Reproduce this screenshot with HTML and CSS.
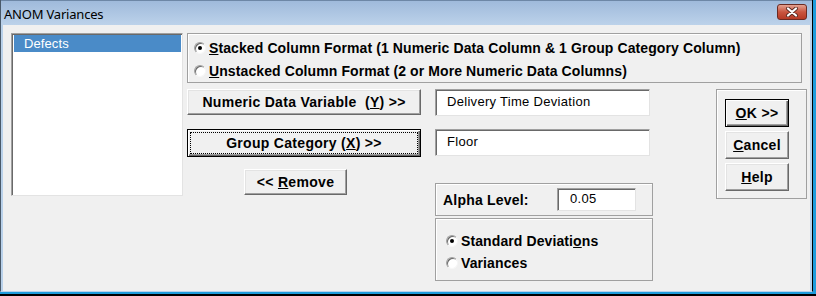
FILE: index.html
```html
<!DOCTYPE html>
<html lang="en">

<head>
    <meta charset="UTF-8">
    <meta name="viewport" content="width=device-width, initial-scale=1.0">
    <title>ANOM Variances</title>
    <link rel="stylesheet" href="styles.css">
</head>

<body>
    <div class="screen">
        <div class="window">
            <div class="titlebar">
                <span class="title">ANOM Variances</span>
                <span class="close-btn">
                    <svg width="14" height="10" viewBox="0 0 14 10">
                        <path d="M3 1.5 L11 8.5 M11 1.5 L3 8.5" stroke="#5a2a22" stroke-width="4" stroke-linecap="round" />
                        <path d="M3 1.5 L11 8.5 M11 1.5 L3 8.5" stroke="#ffffff" stroke-width="2.2" stroke-linecap="round" />
                    </svg>
                </span>
            </div>

            <div class="client">
                <div class="listbox">
                    <div class="list-item selected">Defects</div>
                </div>

                <div class="main">
                    <div class="frame format-frame">
                        <label class="radio-row">
                            <span class="radio checked"></span>
                            <span><u>S</u>tacked Column Format (1 Numeric Data Column &amp; 1 Group Category Column)</span>
                        </label>
                        <label class="radio-row">
                            <span class="radio"></span>
                            <span><u>U</u>nstacked Column Format (2 or More Numeric Data Columns)</span>
                        </label>
                    </div>

                    <div class="work-row">
                        <div class="col-vars">
                            <button class="btn var-btn">Numeric Data Variable&nbsp; (<u>Y</u>) &gt;&gt;</button>
                            <button class="btn var-btn default focused">Group Category (<u>X</u>) &gt;&gt;</button>
                            <button class="btn remove-btn">&lt;&lt; <u>R</u>emove</button>
                        </div>

                        <div class="col-fields">
                            <input class="textbox" type="text" value="Delivery Time Deviation">
                            <input class="textbox second" type="text" value="Floor">

                            <div class="frame alpha-frame">
                                <span class="alpha-label">Alpha Level:</span>
                                <input class="textbox alpha-input" type="text" value="0.05">
                            </div>
                            <div class="frame stat-frame">
                                <label class="radio-row">
                                    <span class="radio checked"></span>
                                    <span>Standard Deviati<u>o</u>ns</span>
                                </label>
                                <label class="radio-row">
                                    <span class="radio"></span>
                                    <span>Variances</span>
                                </label>
                            </div>
                        </div>

                        <div class="frame actions">
                            <button class="btn action-btn default"><u>O</u>K &gt;&gt;</button>
                            <button class="btn action-btn"><u>C</u>ancel</button>
                            <button class="btn action-btn"><u>H</u>elp</button>
                        </div>
                    </div>
                </div>
            </div>
        </div>
    </div>
</body>

</html>
```

FILE: styles.css
```css
body {
    margin: 0;
    background: #000;
    font-family: "Liberation Sans", Arial, sans-serif;
}

.screen {
    width: 816px;
    height: 296px;
    background: #1e9cdc;
    border-bottom: 2px solid #000;
    box-sizing: border-box;
    overflow: hidden;
}

.window {
    width: 813px;
    height: 292px;
    box-sizing: border-box;
    background: #f0f0f0;
    border-left: 1px solid #4a5a6a;
    border-right: 1px solid #000;
    border-bottom: 1px solid #b9d1ea;
    box-shadow: inset 2px 0 0 #b9d1ea, inset -2px 0 0 #b9d1ea;
    display: flex;
    flex-direction: column;
}

.titlebar {
    height: 25px;
    flex: none;
    display: flex;
    align-items: center;
    justify-content: space-between;
    padding: 0 5px 0 3px;
    background: linear-gradient(to bottom, #9fbadb, #bcd2ea);
    border-top: 1px solid #6d87a6;
    box-sizing: border-box;
}

.title {
    font-family: "Noto Sans", "Liberation Sans", sans-serif;
    font-size: 13px;
    letter-spacing: -0.2px;
    color: #000;
    padding-top: 1px;
}

.close-btn {
    width: 30px;
    height: 16px;
    margin-top: -2px;
    box-sizing: border-box;
    border: 1px solid #6b2a22;
    border-radius: 3px;
    background: linear-gradient(to bottom, #e3a191, #c9553f 50%, #b63a25);
    display: flex;
    align-items: center;
    justify-content: center;
}

.client {
    flex: 1;
    display: flex;
    gap: 4px;
    padding: 8px 0 0 10px;
}

.listbox {
    width: 172px;
    height: 163px;
    box-sizing: border-box;
    background: #fff;
    border: 1px solid;
    border-color: #a0a0a0 #e3e3e3 #e3e3e3 #a0a0a0;
    box-shadow: inset 1px 1px 0 #696969;
    padding: 1px 1px 0 2px;
}

.list-item {
    height: 17px;
    line-height: 17px;
    font-size: 13px;
    letter-spacing: 0.1px;
    padding-left: 10px;
}

.list-item.selected {
    background: #4a8bc8;
    color: #fff;
}

.main {
    display: flex;
    flex-direction: column;
}

.frame {
    box-sizing: border-box;
    border: 1px solid #a0a0a0;
    box-shadow: inset 1px 1px 0 #fff;
}

.format-frame {
    width: 615px;
    height: 50px;
    padding: 7px 0 0 6px;
    display: flex;
    flex-direction: column;
    gap: 10px;
}

.radio-row {
    display: flex;
    align-items: center;
    gap: 3px;
    font-size: 14px;
    font-weight: bold;
    letter-spacing: 0.1px;
    color: #000;
    height: 13px;
}

.radio {
    width: 12px;
    height: 12px;
    flex: none;
    box-sizing: border-box;
    border-radius: 50%;
    border: 1px solid;
    border-color: #a0a0a0 #f6f6f6 #f6f6f6 #a0a0a0;
    background: #fff;
    box-shadow: inset 1px 1px 0 #696969;
    display: flex;
    align-items: center;
    justify-content: center;
}

.radio.checked::after {
    content: "";
    width: 4px;
    height: 4px;
    border-radius: 50%;
    background: #000;
}

.work-row {
    display: flex;
    margin-top: 6px;
}

.btn {
    font-family: "Liberation Sans", Arial, sans-serif;
    font-size: 14px;
    font-weight: bold;
    letter-spacing: 0.3px;
    color: #000;
    background: #f0f0f0;
    box-sizing: border-box;
    border: 1px solid;
    border-color: #fff #696969 #696969 #fff;
    box-shadow: inset -1px -1px 0 #a0a0a0, inset 1px 1px 0 #e3e3e3;
    padding: 0;
    position: relative;
}

.btn.default {
    border: 1px solid #000;
    box-shadow: inset 1px 1px 0 #fff, inset -1px -1px 0 #696969, inset -2px -2px 0 #a0a0a0;
}

.btn.focused::after {
    content: "";
    position: absolute;
    inset: 2px;
    border: 1px dotted #000;
}

.col-vars {
    width: 234px;
    display: flex;
    flex-direction: column;
}

.var-btn {
    width: 234px;
    height: 26px;
}

.var-btn.default {
    height: 28px;
    margin-top: 14px;
}

.remove-btn {
    width: 103px;
    height: 26px;
    margin: 12px 0 0 57px;
}

.col-fields {
    width: 218px;
    margin-left: 14px;
    display: flex;
    flex-direction: column;
}

.textbox {
    width: 215px;
    height: 27px;
    box-sizing: border-box;
    margin: 0;
    border: 1px solid;
    border-color: #a0a0a0 #e3e3e3 #e3e3e3 #a0a0a0;
    box-shadow: inset 1px 1px 0 #696969;
    background: #fff;
    font-family: "Liberation Sans", Arial, sans-serif;
    font-size: 13px;
    letter-spacing: 0.3px;
    color: #000;
    padding: 0 0 2px 11px;
    outline: none;
}

.textbox.second {
    margin-top: 13px;
}

.alpha-frame {
    height: 33px;
    margin-top: 27px;
    display: flex;
    align-items: center;
    padding-left: 7px;
}

.alpha-label {
    width: 114px;
    font-size: 14px;
    font-weight: bold;
    letter-spacing: 0.2px;
}

.alpha-input {
    width: 79px;
    height: 23px;
    padding-left: 12px;
}

.stat-frame {
    height: 63px;
    margin-top: 2px;
    padding: 15px 0 0 10px;
    display: flex;
    flex-direction: column;
    gap: 9px;
}

.actions {
    width: 91px;
    height: 110px;
    margin-left: 63px;
    padding: 9px 0 0 8px;
    display: flex;
    flex-direction: column;
    gap: 4px;
}

.action-btn {
    width: 64px;
    height: 28px;
}
```
